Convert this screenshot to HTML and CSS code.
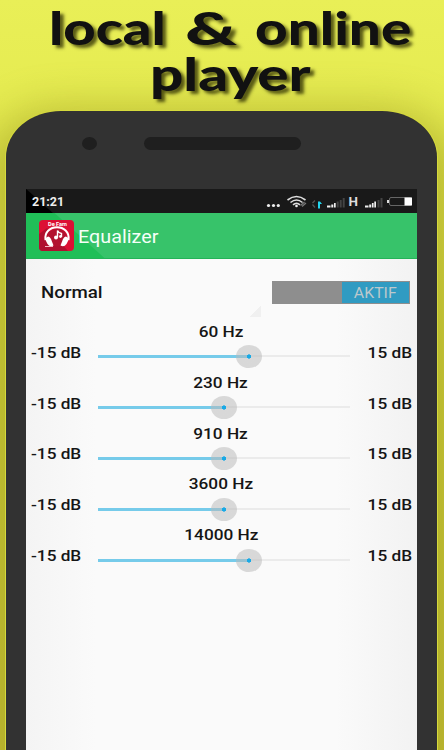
FILE: index.html
```
<!DOCTYPE html>
<html lang="en">
<head>
<meta charset="UTF-8" />
<meta name="viewport" content="width=device-width, initial-scale=1" />
<title>Equalizer</title>
<link rel="stylesheet" href="styles.css">
</head>
<body>

<h1 class="headline">
  <span class="line"><span class="w-local">local</span><span class="w-amp">&amp;</span><span class="w-online">online</span></span>
  <span class="line"><span class="w-player">player</span></span>
</h1>

<div class="phone">
  <div class="phone-top">
    <div class="camera"></div>
    <div class="speaker"></div>
  </div>

  <div class="screen">
    <div class="status-bar">
      <span class="clock">21:21</span>
      <svg class="status-icons" width="152" height="24" viewBox="0 0 152 24">
        <g fill="#eee">
          <circle cx="3.5" cy="16.5" r="1.6"/><circle cx="8.5" cy="16.5" r="1.6"/><circle cx="13.3" cy="16.5" r="1.6"/>
        </g>
        <!-- wifi -->
        <g fill="none" stroke="#ddd" stroke-width="1.6">
          <path d="M22.500 11Q31.500 4 40.500 11"/>
          <path d="M25.500 13.500Q31.500 8.500 37.500 13.500"/>
          <path d="M28 15.800Q31.500 12.800 35 15.800"/>
        </g>
        <circle cx="31.5" cy="17" r="1.3" fill="#eee"/>
        <path d="M35.5 16.500L39.5 13M37 17.500L41 14" stroke="#777" stroke-width="1.3"/>
        <!-- data arrows -->
        <path d="M50 11.5L47.5 14M47.5 15.5L50 18.5" stroke="#555" stroke-width="1.3"/>
        <path d="M53 12.500h2l2 2.500h-2v4.500h-2z" fill="#23d5ee"/>
        <!-- signal 1 -->
        <path d="M62 16.500h3.5v2H62zM66.3 15.500h2v3h-2zM69 14h1.700v4.500H69z" fill="#eee"/>
        <path d="M71.7 12.500h2v6h-2zM74.7 11h2v7.500h-2zM77.7 9h2v9.500h-2z" fill="#444"/>
        <text x="83.500" y="17" class="network" textLength="9.500" lengthAdjust="spacingAndGlyphs">H</text>
        <!-- signal 2 -->
        <path d="M100 16.500h3.5v2H100zM104.2 15.500h2v3h-2zM106.9 14h1.700v4.500h-1.700zM109.3 12.500h1.700v6h-1.700z" fill="#eee"/>
        <path d="M112.5 11h2v7.500h-2zM115.5 9h2v9.500h-2z" fill="#444"/>
        <!-- battery -->
        <rect x="124.5" y="8.5" width="22" height="8" rx="1.5" fill="none" stroke="#666"/>
        <rect x="122" y="11" width="2" height="3" fill="#ddd"/>
        <rect x="139.5" y="8.5" width="7.5" height="8" fill="#fff"/>
      </svg>
    </div>

    <div class="action-bar">
      <svg class="app-icon" width="35" height="31" viewBox="0 0 35 31">
        <rect width="35" height="31" rx="4" fill="#dc1034"/>
        <path d="M0 14L8 8L29 31H4Q0 31 0 27Z" fill="#b0102f"/>
        <text x="9" y="5.5" class="icon-text" textLength="19" lengthAdjust="spacingAndGlyphs">De Fam</text>
        <ellipse cx="18" cy="17.5" rx="10" ry="9" fill="#b3122f"/>
        <path d="M6.5 20C4 3 32 3 29.5 20" fill="none" stroke="#fff" stroke-width="2"/>
        <path d="M6 19Q9.5 14 12 19L14.5 25.5Q11 27.5 8.5 24Z" fill="#fff"/>
        <path d="M30 19Q26.5 14 24 19L21.5 25.5Q25 27.5 27.5 24Z" fill="#fff"/>
        <path d="M18.5 17.5V10.5Q19.5 13 22.5 13.5V17" fill="none" stroke="#fff" stroke-width="1.4"/>
        <circle cx="17" cy="17.5" r="2" fill="#fff"/><circle cx="21.5" cy="16.5" r="1.4" fill="#fff"/>
        <path d="M6 26.5H14" stroke="#f5b8c2"/>
      </svg>
      <span class="app-title">Equalizer</span>
    </div>

    <div class="preset-row">
      <div class="preset">Normal</div>
      <div class="toggle"><div class="toggle-on"><span>AKTIF</span></div></div>
    </div>

    <div class="bands">
      <div class="band">
        <div class="freq"><span>60 Hz</span></div>
        <div class="level"><span class="min">-15 dB</span><div class="track"><div class="fill" style="width:60%"><i class="knob"></i></div></div><span class="max">15 dB</span></div>
      </div>
      <div class="band">
        <div class="freq"><span>230 Hz</span></div>
        <div class="level"><span class="min">-15 dB</span><div class="track"><div class="fill" style="width:50%"><i class="knob"></i></div></div><span class="max">15 dB</span></div>
      </div>
      <div class="band">
        <div class="freq"><span>910 Hz</span></div>
        <div class="level"><span class="min">-15 dB</span><div class="track"><div class="fill" style="width:50%"><i class="knob"></i></div></div><span class="max">15 dB</span></div>
      </div>
      <div class="band">
        <div class="freq"><span>3600 Hz</span></div>
        <div class="level"><span class="min">-15 dB</span><div class="track"><div class="fill" style="width:50%"><i class="knob"></i></div></div><span class="max">15 dB</span></div>
      </div>
      <div class="band">
        <div class="freq"><span>14000 Hz</span></div>
        <div class="level"><span class="min">-15 dB</span><div class="track"><div class="fill" style="width:60%"><i class="knob"></i></div></div><span class="max">15 dB</span></div>
      </div>
    </div>
  </div>
</div>

</body>
</html>
```
FILE: styles.css
```
* {
  box-sizing: border-box;
}

body {
  margin: 0;
  width: 444px;
  height: 750px;
  overflow: hidden;
  display: flex;
  flex-direction: column;
  background: linear-gradient(#e9ef57 0, #e5eb50 120px, #d6d83f 400px, #cdc93a 750px);
  font-family: Roboto, sans-serif;
  color: #151515;
}

.headline {
  flex: none;
  height: 111px;
  margin: 0;
  padding-top: 5px;
  font: 900 46px/46px Lato, sans-serif;
  color: #111;
  text-shadow: 3px 3px 3px rgba(40, 40, 0, 0.75);
  position: relative;
  z-index: 1;
}
.headline .line {
  display: flex;
}
.headline .line span {
  display: block;
  transform-origin: 0 50%;
  white-space: nowrap;
}
.w-local {
  width: 136px;
  margin-left: 49px;
  transform: scaleX(1.22);
}
.w-amp {
  width: 70px;
  transform: scaleX(1.55);
}
.w-online {
  transform: scaleX(1.23);
}
.w-player {
  margin-left: 150px;
  transform: scaleX(1.27);
}

/* phone body */
.phone {
  flex: none;
  width: 431px;
  height: 639px;
  margin-left: 6px;
  border-radius: 55px 55px 0 0 / 46px 46px 0 0;
  background: #323232;
  box-shadow: 0 0 0 1px #d5d93c, 0 20px 42px 24px rgba(145, 140, 25, 0.45);
}

.phone-top {
  height: 78px;
  padding: 26px 0 0 76px;
  display: flex;
}
.camera {
  width: 15px;
  height: 13px;
  border-radius: 50%;
  background: #1f1f1f;
}
.speaker {
  width: 157px;
  height: 13px;
  margin-left: 47px;
  border-radius: 7px;
  background: #1f1f1f;
}

.screen {
  width: 391px;
  height: 561px;
  margin-left: 19.5px;
  background: linear-gradient(90deg, #f4f4f4, #fafafa 70px, #fafafa 310px, #f2f2f2);
}

.status-bar {
  height: 24px;
  padding-left: 6px;
  display: flex;
  align-items: center;
  justify-content: space-between;
  background: linear-gradient(42deg, #000 17.5px, #191919 18.5px);
}
.clock {
  width: 32px;
  margin-top: 2px;
  font-size: 12px;
  font-weight: 700;
  color: #eee;
  transform: scaleX(1.04);
  transform-origin: 0 50%;
}
.network {
  font: 700 12px Roboto, sans-serif;
  fill: #ddd;
}

.action-bar {
  height: 46px;
  padding-left: 13.5px;
  display: flex;
  align-items: center;
  background: linear-gradient(42deg, #20bf58 52px, #37c36a 53px);
  border-bottom: 1px solid #24b358;
}
.icon-text {
  font: 700 5.5px Roboto, sans-serif;
  fill: #fff;
}
.app-title {
  margin: 2px 0 0 4px;
  font-size: 19px;
  color: #f5fff8;
  transform: scaleX(1.04);
  transform-origin: 0 50%;
}

/* preset name and on/off switch */
.preset-row {
  height: 59px;
  padding: 22px 7px 0 15px;
  display: flex;
  justify-content: space-between;
  background: linear-gradient(135deg, transparent 50%, #f0f0f0 50%) 223px 47px / 12px 11px no-repeat;
}
.preset {
  height: 24px;
  font-size: 17px;
  font-weight: 500;
  line-height: 22px;
  transform: scaleX(1.1);
  transform-origin: 0 50%;
}
.toggle {
  width: 138px;
  height: 23px;
  padding: 1px;
  display: flex;
  justify-content: flex-end;
  background: #8e8e8e;
}
.toggle-on {
  width: 67px;
  display: flex;
  align-items: center;
  justify-content: center;
  background: #309bc2;
  color: #bcc8cc;
  font-size: 15px;
}
.toggle-on span {
  transform: scaleX(1.06);
}

.bands {
  padding-top: 2px;
}
.band {
  height: 50.8px;
  font-size: 15.5px;
  font-weight: 500;
}
.freq {
  height: 24px;
  line-height: 24px;
  text-align: center;
}
.freq span,
.level span {
  display: inline-block;
  transform: scaleX(1.11);
}
.level {
  height: 26px;
  margin-top: -0.7px;
  padding: 0 5px;
  display: flex;
  align-items: center;
}
.level span {
  line-height: 18px;
  margin-bottom: 7px;
  white-space: nowrap;
}
.level .min {
  width: 67.5px;
  transform-origin: 0 50%;
}
.level .max {
  margin-left: auto;
  transform-origin: 100% 50%;
}

.track {
  flex: none;
  width: 252px;
  height: 2px;
  background: #ebebeb;
}
.fill {
  height: 3px;
  background: #76cbea;
  position: relative;
}
.knob {
  position: absolute;
  right: -13px;
  top: -10px;
  width: 26px;
  height: 23px;
  border-radius: 50%;
  background: radial-gradient(circle, #18a9e6 1.8px, rgba(185, 185, 185, 0.52) 2.5px);
}
```
